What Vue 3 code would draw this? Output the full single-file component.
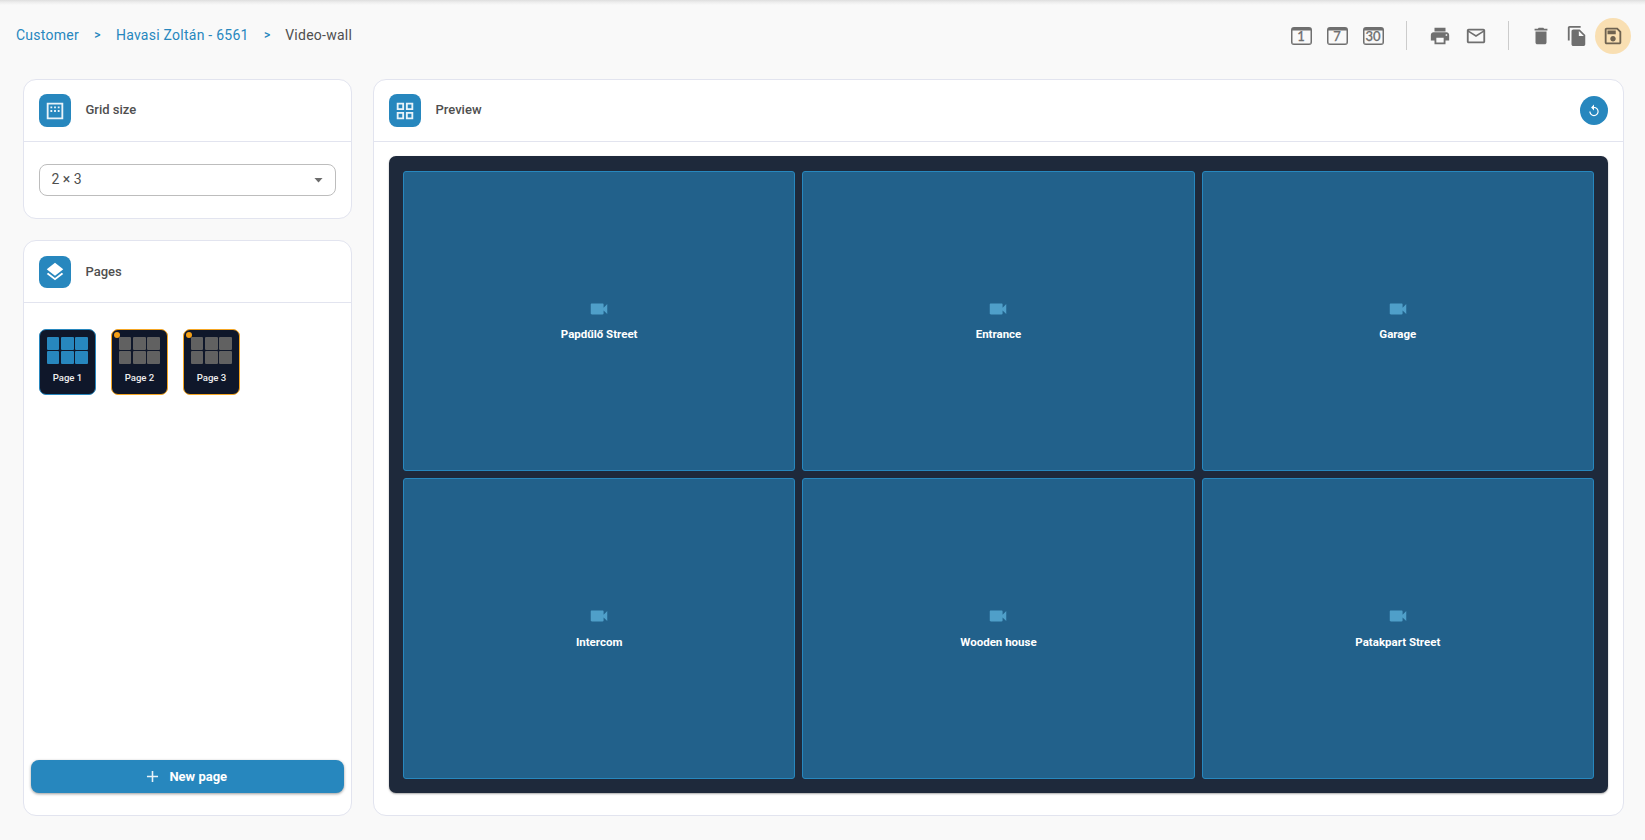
<script setup>
const days = ['1', '7', '30']
const pages = [
  { name: 'Page 1', active: true },
  { name: 'Page 2', active: false },
  { name: 'Page 3', active: false },
]
const cameras = ['Papdűlő Street', 'Entrance', 'Garage', 'Intercom', 'Wooden house', 'Patakpart Street']
</script>

<template>
  <div class="app">
    <header class="topbar">
      <nav class="crumbs">
        <a>Customer</a><span class="sep">&gt;</span><a>Havasi Zoltán - 6561</a><span class="sep">&gt;</span><span class="current">Video-wall</span>
      </nav>
      <div class="tools">
        <button v-for="d in days" :key="d" class="tool">
          <span class="cal">{{ d }}</span>
        </button>
        <i class="divider"></i>
        <button class="tool">
          <svg viewBox="0 0 24 24"><path d="M19 8H5c-1.66 0-3 1.34-3 3v6h4v4h12v-4h4v-6c0-1.66-1.34-3-3-3zm-3 11H8v-5h8v5zm3-7c-.55 0-1-.45-1-1s.45-1 1-1 1 .45 1 1-.45 1-1 1zm-1-9H6v4h12V3z" /></svg>
        </button>
        <button class="tool">
          <svg viewBox="0 0 24 24"><path d="M22 6c0-1.100-.9-2-2-2H4c-1.100 0-2 .9-2 2v12c0 1.100.9 2 2 2h16c1.100 0 2-.9 2-2V6zm-2 0-8 5-8-5h16zm0 12H4V8l8 5 8-5v10z" /></svg>
        </button>
        <i class="divider narrow"></i>
        <button class="tool">
          <svg viewBox="0 0 24 24"><path d="M6 19c0 1.100.9 2 2 2h8c1.100 0 2-.9 2-2V7H6v12zM19 4h-3.500l-1-1h-5l-1 1H5v2h14V4z" /></svg>
        </button>
        <button class="tool">
          <svg viewBox="0 0 24 24"><path d="M16 1H4c-1.100 0-2 .9-2 2v14h2V3h12V1zm-1 4 6 6v10c0 1.100-.9 2-2 2H7.990C6.890 23 6 22.100 6 21l.01-14c0-1.100.89-2 1.990-2h7zm-1 7h5.500L14 6.500V12z" /></svg>
        </button>
        <button class="tool save">
          <svg viewBox="0 0 24 24"><path d="M17 3H5c-1.110 0-2 .9-2 2v14c0 1.100.89 2 2 2h14c1.100 0 2-.9 2-2V7l-4-4zm2 16H5V5h11.170L19 7.830V19zm-7-7c-1.660 0-3 1.340-3 3s1.340 3 3 3 3-1.340 3-3-1.340-3-3-3zM6 6h9v4H6z" /></svg>
        </button>
      </div>
    </header>

    <main class="main">
      <div class="side">
        <section class="card">
          <div class="head">
            <span class="badge">
              <svg viewBox="0 0 24 24"><path d="M3 3v18h18V3H3zm16 16H5V5h14v14zM11 7h2v2h-2zM7 7h2v2H7zm8 0h2v2h-2zm-8 4h2v2H7zm4 0h2v2h-2zm4 0h2v2h-2z" /></svg>
            </span>
            <h2>Grid size</h2>
          </div>
          <div class="select-wrap">
            <div class="select"><span>2 × 3</span><i class="caret"></i></div>
          </div>
        </section>

        <section class="card pages">
          <div class="head">
            <span class="badge">
              <svg viewBox="0 0 24 24"><path d="m11.990 18.540-7.370-5.730L3 14.070l9 7 9-7-1.630-1.270-7.380 5.740zM12 16l7.360-5.730L21 9l-9-7-9 7 1.630 1.270L12 16z" /></svg>
            </span>
            <h2>Pages</h2>
          </div>
          <div class="thumbs">
            <div v-for="p in pages" :key="p.name" class="thumb" :class="{ active: p.active }">
              <i v-if="!p.active" class="dot"></i>
              <div class="mini"><i v-for="n in 6" :key="n"></i></div>
              <span>{{ p.name }}</span>
            </div>
          </div>
          <button class="new-page">
            <svg viewBox="0 0 24 24"><path d="M19 13h-6v6h-2v-6H5v-2h6V5h2v6h6v2z" /></svg>
            <span>New page</span>
          </button>
        </section>
      </div>

      <section class="card preview">
        <div class="head">
          <span class="badge">
            <svg viewBox="0 0 24 24"><path d="M3 3v8h8V3H3zm6 6H5V5h4v4zm-6 4v8h8v-8H3zm6 6H5v-4h4v4zm4-16v8h8V3h-8zm6 6h-4V5h4v4zm-6 4v8h8v-8h-8zm6 6h-4v-4h4v4z" /></svg>
          </span>
          <h2>Preview</h2>
          <button class="reset">
            <svg viewBox="0 0 24 24"><path d="M12 5V1L7 6l5 5V7c3.310 0 6 2.690 6 6s-2.690 6-6 6-6-2.690-6-6H4c0 4.420 3.580 8 8 8s8-3.580 8-8-3.580-8-8-8z" /></svg>
          </button>
        </div>
        <div class="wall">
          <div v-for="c in cameras" :key="c" class="cell">
            <svg viewBox="0 0 24 24"><path d="M17 10.500V7c0-.55-.45-1-1-1H4c-.55 0-1 .45-1 1v10c0 .55.45 1 1 1h12c.55 0 1-.45 1-1v-3.500l4 4v-11l-4 4z" /></svg>
            <span>{{ c }}</span>
          </div>
        </div>
      </section>
    </main>
  </div>
</template>

<style>
body {
  background: #f9f9f9;
}
</style>

<style scoped>
* {
  box-sizing: border-box;
}
.app {
  height: 840px;
  display: flex;
  flex-direction: column;
  overflow: hidden;
  background: linear-gradient(#dedede, #ececec 2px, #f9f9f9 5px);
  font-family: Roboto, 'Liberation Sans', sans-serif;
  color: #4f4f4f;
}
button {
  border: 0;
  padding: 0;
  background: none;
  font-family: inherit;
}
svg {
  fill: currentColor;
  display: block;
}
.topbar {
  height: 79px;
  flex: none;
  padding: 18px 14px 0 16px;
  display: flex;
  justify-content: space-between;
  align-items: flex-start;
}
.crumbs {
  height: 34px;
  display: flex;
  align-items: center;
  font-size: 14px;
  letter-spacing: 0.25px;
  white-space: nowrap;
}
.crumbs a {
  color: #2787be;
}
.sep {
  color: #2787be;
  font-size: 12px;
  font-weight: 500;
  width: 37px;
  text-align: center;
}
.current {
  margin-left: -0.5px;
}
.tools {
  display: flex;
  align-items: center;
  height: 36px;
}
.tool {
  width: 36px;
  height: 36px;
  display: flex;
  align-items: center;
  justify-content: center;
  color: #6f6f6f;
  border-radius: 50%;
}
.tool svg {
  width: 22px;
  height: 22px;
}
.save {
  background: #f9dfb2;
  color: #6e6250;
}
.cal {
  width: 21px;
  height: 18px;
  border: 1px solid #6f6f6f;
  border-top-width: 3px;
  border-radius: 3px;
  box-shadow: inset 0 0 0 0.5px #6f6f6f;
  font: 500 13px/13px Lato, sans-serif;
  display: flex;
  justify-content: center;
  -webkit-text-stroke: 0.25px #6f6f6f;
}
.divider {
  width: 1px;
  height: 29px;
  margin: 0 14.500px 1px 15px;
  background: #ccc;
}
.divider.narrow {
  margin-left: 14px;
}
.main {
  height: 737px;
  display: flex;
  gap: 21px;
  padding: 0 21px 0 23px;
}
.side {
  width: 329px;
  flex: none;
  display: flex;
  flex-direction: column;
  gap: 21px;
}
.card {
  background: #fff;
  border: 1px solid #e2e4ef;
  border-radius: 13px;
}
.head {
  height: 62px;
  border-bottom: 1px solid #e2e4ef;
  padding: 0 15px;
  display: flex;
  align-items: center;
}
.badge {
  width: 32px;
  height: 33px;
  border-radius: 8px;
  background: #2787be;
  color: rgba(255, 255, 255, 0.9);
  display: flex;
  align-items: center;
  justify-content: center;
}
.badge svg {
  width: 22px;
  height: 22px;
}
.pages .badge svg {
  color: #fff;
}
.head h2 {
  margin: 0 auto 2px 14.500px;
  font-size: 13px;
  line-height: 18px;
  font-weight: 500;
}
.pages .badge {
  height: 32px;
  margin-top: 1px;
}
.pages h2 {
  margin-bottom: 0;
}
.select-wrap {
  padding: 22px 15px;
}
.select {
  height: 32px;
  border: 1px solid #bdbdbd;
  border-radius: 8px;
  padding: 0 12px 0 11.500px;
  display: flex;
  align-items: center;
  justify-content: space-between;
  font-size: 14px;
}
.select span {
  margin-bottom: 2px;
}
.caret {
  width: 9px;
  height: 5px;
  background: #6c6c6c;
  clip-path: polygon(0 0, 100% 0, 50% 100%);
}
.pages {
  flex: 1;
  display: flex;
  flex-direction: column;
}
.thumbs {
  flex: 1;
  display: flex;
  gap: 15px;
  padding: 26px 15px 0;
}
.thumb {
  position: relative;
  width: 57px;
  height: 66px;
  border: 1px solid #f5a623;
  border-radius: 7px;
  background: #0f172a;
  color: #eee;
  padding-top: 7px;
  display: flex;
  flex-direction: column;
  align-items: center;
  font-size: 9.600px;
  font-weight: 500;
  line-height: 12px;
}
.thumb.active {
  border-color: #2787be;
}
.mini {
  width: 41px;
  height: 27px;
  display: grid;
  grid-template-columns: 12px 13px 13px;
  grid-template-rows: 1fr 1fr;
  gap: 1px 1.500px;
  margin-bottom: 8px;
}
.mini i {
  background: #616161;
  border-radius: 1px;
}
.active .mini i {
  background: #2787be;
}
.dot {
  position: absolute;
  left: 2px;
  top: 2px;
  width: 6px;
  height: 6px;
  border-radius: 50%;
  background: #f5a016;
}
.new-page {
  flex: none;
  height: 33px;
  margin: 0 7px 22px;
  padding-right: 4.500px;
  border-radius: 8px;
  background: #2787be;
  color: #fff;
  box-shadow: 0 1px 3px rgba(0, 0, 0, 0.4);
  display: flex;
  align-items: center;
  justify-content: center;
  gap: 7px;
  font-size: 13px;
  font-weight: 700;
}
.new-page svg {
  width: 19px;
  height: 19px;
  opacity: 0.9;
}
.preview {
  flex: 1;
  display: flex;
  flex-direction: column;
}
.reset {
  width: 28px;
  height: 29px;
  border-radius: 50%;
  background: #2787be;
  color: #fff;
  display: flex;
  align-items: center;
  justify-content: center;
}
.reset svg {
  width: 14px;
  height: 14px;
}
.wall {
  flex: 1;
  margin: 14px 15px 22px;
  padding: 15px 14px 14px;
  border-radius: 7px;
  background: #1e293b;
  box-shadow: 0 1px 2px rgba(0, 0, 0, 0.35);
  display: grid;
  grid-template-columns: repeat(3, 1fr);
  grid-template-rows: 300fr 301fr;
  gap: 7px;
}
.cell {
  border: 1px solid #2787be;
  border-radius: 3px;
  background: #22618b;
  color: #fff;
  padding-bottom: 3px;
  display: flex;
  flex-direction: column;
  align-items: center;
  justify-content: center;
  gap: 7px;
  font-size: 11.500px;
  font-weight: 700;
  line-height: 14px;
}
.cell:nth-child(n + 4) {
  gap: 8px;
}
.cell svg {
  width: 22px;
  height: 22px;
  color: #4f9fc9;
}
</style>
